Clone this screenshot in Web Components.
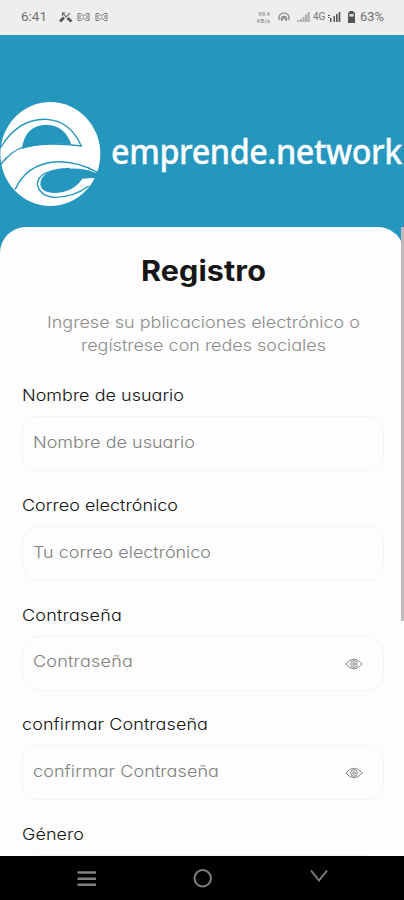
<!DOCTYPE html>
<html lang="es"><head><meta charset="utf-8"><title>Registro</title>
<style>html,body{margin:0;height:100%}body{background:#fdfdfd;font-family:Inter,sans-serif;overflow:hidden}</style></head>
<body><register-screen></register-screen>
<script>
const make=(name,html)=>customElements.define(name,class extends HTMLElement{
 connectedCallback(){if(!this.shadowRoot)this.attachShadow({mode:'open'}).innerHTML=html;}
});
make('fit-text','<style>:host{display:block;white-space:nowrap;flex:none}span{display:inline-block;transform-origin:0 50%}</style><span><slot></slot></span>');
make('status-bar',`<style>:host{display:flex;box-sizing:border-box;height:34.5px;padding:0 20px 0 21px;align-items:center;background:#eee;color:#707070;font:13px/16px Roboto,sans-serif;flex:none}
svg{display:block;flex:none}.sp{flex:1}.rate{font-size:6px;text-align:right;width:14px;margin-right:8px;color:#777}.rate div{height:7px;line-height:7px}.g{font-size:10.5px;margin:0 2px 0 3px;color:#777}</style>
<fit-text w="26">6:41</fit-text>
<svg width="50" height="14" style="margin-left:12px" viewBox="0 0 50 14" fill="none" stroke="#777"><path d="M1 11.500L5 7.500M8.500 8L12.500 11.500" stroke="#555" stroke-width="2.800"/><path d="M4 3L7 7L11 3M3.500 6V2.800H6" stroke-width="1.200"/><path d="M19 3.500h2.500L24.500 6L27.500 3.500H30v7h-2.500L24.500 8L21.500 10.500H19zM21 5v4M28 5v4M37 3.500h2.500L42.500 6L45.500 3.500H48v7h-2.500L42.500 8L39.500 10.500H37zM39 5v4M46 5v4" stroke-width="1"/></svg>
<span class="sp"></span><div class="rate"><div>99.4</div><div>KB/s</div></div>
<svg width="12" height="12" viewBox="0 0 12 12" fill="none" stroke="#8a8a8a" stroke-width="1.300"><path d="M1.500 9A5 5 0 1 1 10.500 9M3.500 9A2.700 2.700 0 1 1 8.500 9M6 6L3.500 10M6 6L8.500 10"/></svg>
<svg width="13" height="12" style="margin-left:7px" viewBox="0 0 13 12" fill="#b0b0b0"><path d="M0 9h2.200v2H0zM2.800 8H5v3H2.800zM5.400 6h2.200v5H5.400zM8 3.500h2.200V11H8zM10.600 1h2.200v10h-2.200z"/></svg>
<span class="g"><fit-text w="12">4G</fit-text></span>
<svg width="14" height="12" viewBox="0 0 14 12" fill="#555"><path d="M1 4h2v1H1zM1 6h1.500v1H1zM3 7h1.500v4H3zM6.500 5H8v6H6.500zM9 3h1.600v8H9zM11.600 1h1.700v10h-1.700z"/></svg>
<svg width="9" height="14" style="margin:0 4px 0 6px" viewBox="0 0 9 14"><path d="M2.500 1h4v1.500H8V13H1V2.500h1.500z" fill="#555"/><path d="M2.300 4h4.400v2.500H2.300z" fill="#ddd"/></svg>
<fit-text w="24">63%</fit-text>`);
make('brand-logo',`<style>:host{display:flex;height:108px;align-items:flex-start;color:#fff}svg{display:block;flex:none}
fit-text{font:500 34px/44px "Noto Sans",sans-serif;margin:29px 0 0 10px;-webkit-text-stroke:.3px #fff}</style>
<svg width="101" height="108" viewBox="0 30 303 324"><ellipse cx="151" cy="192" rx="150" ry="156" fill="#fff"/>
<g fill="#2596be"><path d="M65 177Q76 104 140 104Q194 106 214 163Q135 156 65 177Z"/><path d="M121 284Q120 237 210 236Q250 234 286 248L312 240V268L277 264L247 266Q220 307 162 309Q123 306 121 284Z"/></g>
<g fill="none" stroke="#2596be" stroke-width="4.200"><path d="M1 174Q54 86 138 88Q211 91 244 169"/><path d="M2 224Q35 180 75 170Q145 155 246 168"/><path d="M45 299Q79 224 162 216Q226 211 293 247"/><path d="M210 235Q113 239 112 283Q119 319 165 322Q221 322 266 288"/></g></svg>
<fit-text w="291">emprende.network</fit-text>`);
make('eye-icon',`<style>:host{display:block}svg{display:block}</style><svg width="18" height="12" viewBox="0 0 18 12" fill="none" stroke="#858585" stroke-width="1"><path d="M.800 6Q9-3.600 17.200 6Q9 15.600.800 6Z"/><circle cx="9" cy="6" r="3.300"/><circle cx="9" cy="6" r="1.300"/></svg>`);
make('form-field',`<style>:host{display:block;height:109.600px;font:300 16.500px/24px Inter,sans-serif;font-feature-settings:"cv11"}
.l{height:33px;color:#111}.b{box-sizing:border-box;height:55px;border:1.500px solid #f4f4f4;border-radius:17px;padding:0 20px 4px 9.500px;display:flex;align-items:center;justify-content:space-between;color:#808080}::slotted(eye-icon){margin-top:5px}</style><div class="l"><slot name="label"></slot></div><div class="b"><slot></slot></div>`);
make('nav-bar',`<style>:host{display:flex;height:44px;background:#000;flex:none}svg{display:block}</style>
<svg width="404" height="44" fill="none" stroke="#808080" stroke-width="2"><path d="M77.500 16.500H96M77.500 22.700H96M77.500 28.700H96" stroke-width="2.500"/><circle cx="202.700" cy="22.300" r="8.200"/><path d="M311 14.500L319 24.500L327 14.500"/></svg>`);
make('register-screen',`<style>:host{display:flex;flex-direction:column;width:404px;height:900px;background:#2596be;overflow:hidden;position:relative}
header{height:192.500px;flex:none;box-sizing:border-box;padding-top:65.500px}
main{flex:1;min-height:0;overflow:hidden;background:#fdfdfd;border-radius:26px 26px 0 0;padding:0 20px 0 22px}
h1{margin:27px 0 0;font:700 28px/34px Inter,sans-serif;color:#161616}
.sub{margin:22.500px 0 25.500px;font:300 16.500px/23.700px Inter,sans-serif;color:#8c8c8c;font-feature-settings:"cv11"}
.sub fit-text,h1 fit-text{margin:0 auto}
i{position:absolute;right:0;top:227px;width:3.500px;height:394px;background:#bdb9bc}</style>
<status-bar></status-bar><header><brand-logo></brand-logo></header>
<main><h1><fit-text w="125">Registro</fit-text></h1>
<div class="sub"><fit-text w="313">Ingrese su pblicaciones electrónico o</fit-text><fit-text w="245">regístrese con redes sociales</fit-text></div>
<form-field><fit-text slot="label" w="162">Nombre de usuario</fit-text><fit-text w="162">Nombre de usuario</fit-text></form-field>
<form-field><fit-text slot="label" w="156">Correo electrónico</fit-text><fit-text w="178">Tu correo electrónico</fit-text></form-field>
<form-field><fit-text slot="label" w="100">Contraseña</fit-text><fit-text w="100">Contraseña</fit-text><eye-icon></eye-icon></form-field>
<form-field><fit-text slot="label" w="186">confirmar Contraseña</fit-text><fit-text w="186">confirmar Contraseña</fit-text><eye-icon></eye-icon></form-field>
<form-field><fit-text slot="label" w="62">Género</fit-text></form-field></main><nav-bar></nav-bar><i></i>`);
// Each line fills its width "w": glyphs stretch by up to 9%, tracking takes the rest.
const fit=root=>root.querySelectorAll('*').forEach(e=>{
 if(e.localName==='fit-text'){
  const s=e.shadowRoot.querySelector('span'),w=+e.getAttribute('w'),base=s.offsetWidth&&s.getBoundingClientRect().width;
  const k=Math.min(1.09,Math.max(.95,w/base));
  s.style.letterSpacing=((w/k-base)/e.textContent.length)+'px';
  s.style.transform='scaleX('+k+')';
  e.style.width=w+'px';
 }
 if(e.shadowRoot)fit(e.shadowRoot);
});
fit(document);
</script></body></html>
